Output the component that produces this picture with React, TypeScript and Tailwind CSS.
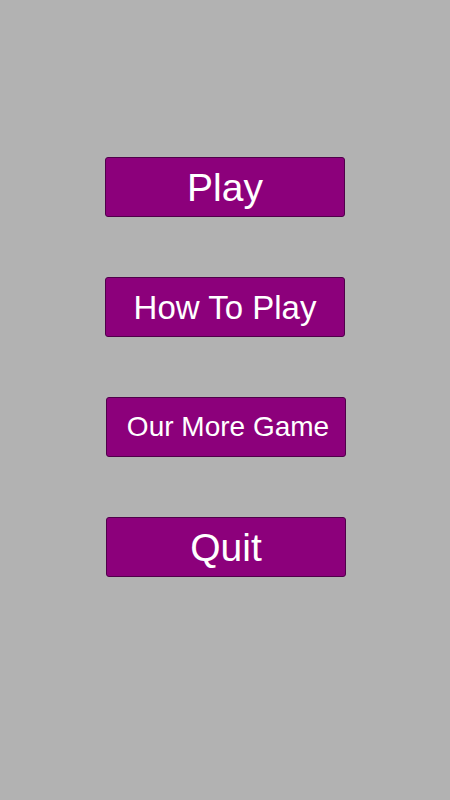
export default function App() {
  const buttons = [
    { label: "Play", size: "text-[39px]", shift: "" },
    { label: "How To Play", size: "text-[33px]", shift: "" },
    { label: "Our More Game", size: "text-[28px] pl-[4px]", shift: "ml-[2px]" },
    { label: "Quit", size: "text-[39px]", shift: "ml-[2px]" },
  ];

  return (
    <div className="min-h-screen w-full bg-[#b2b2b2] font-['Liberation_Sans',Arial,sans-serif]">
      <div className="flex flex-col items-center gap-[60px] pt-[157px]">
        {buttons.map((b) => (
          <button
            key={b.label}
            className={`flex h-[60px] w-[240px] items-center justify-center rounded-[3px] border border-[#50004a] bg-[#8c007b] leading-none text-white ${b.size} ${b.shift}`}
          >
            {b.label}
          </button>
        ))}
      </div>
    </div>
  );
}
